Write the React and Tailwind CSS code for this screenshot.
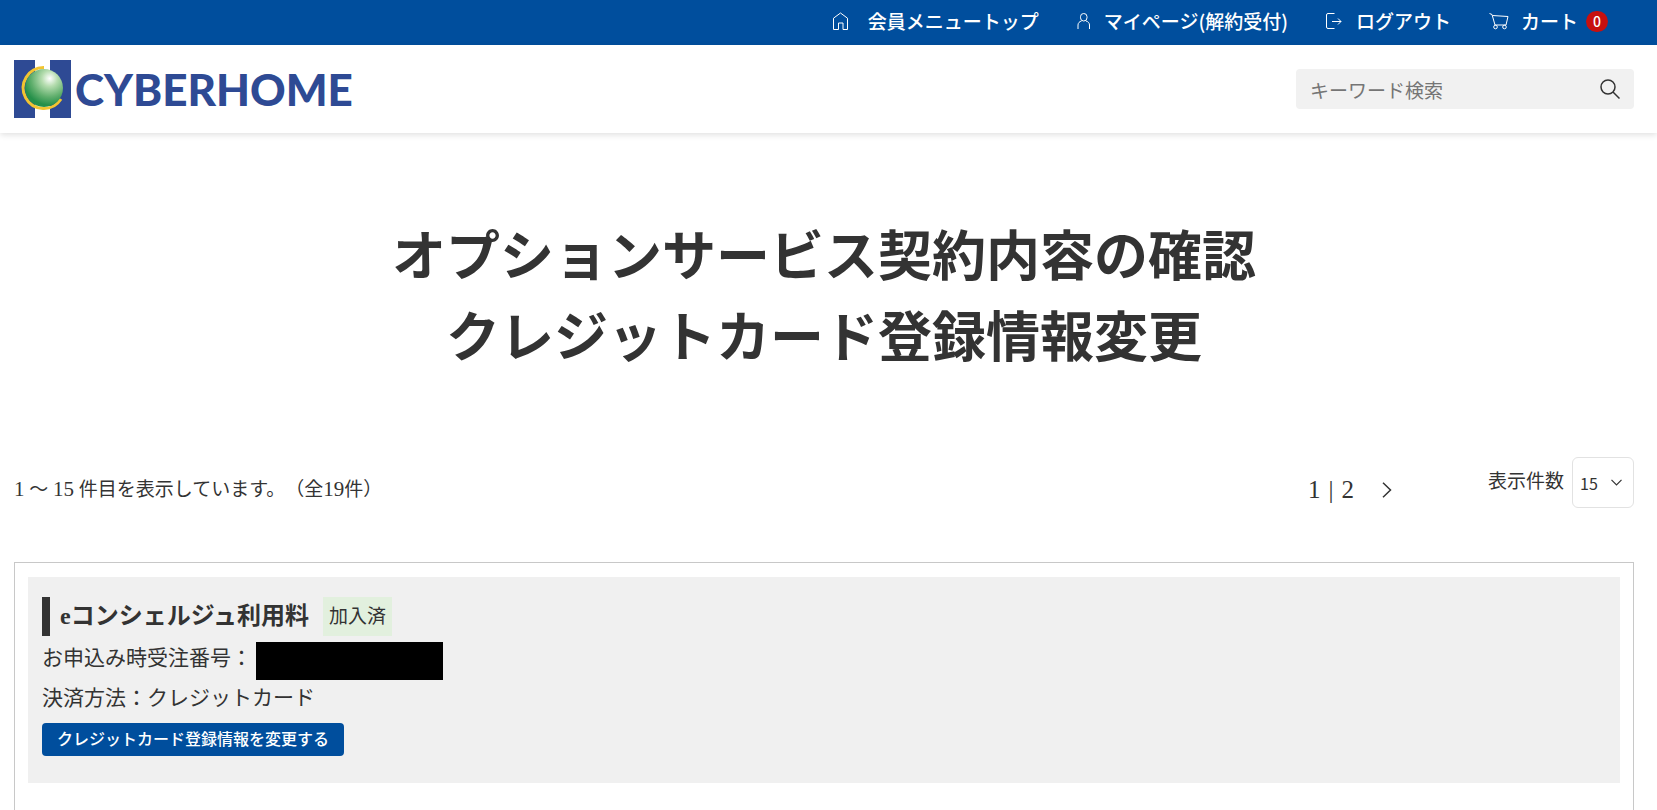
import React, { useState } from 'react';

const HomeIcon = () => (
  <svg className="w-4 h-[18px]" viewBox="0 0 16 18" fill="none" stroke="currentColor" aria-hidden="true">
    <path d="M1.500 17.500V6.200L8.500 1l7 5.200v11.300h-4.500v-6.500H6.500v6.500z" />
  </svg>
);

const UserIcon = () => (
  <svg className="w-[13px] h-4" viewBox="0 0 13 16" fill="none" stroke="currentColor" aria-hidden="true">
    <rect x="3.500" y=".5" width="6.500" height="7.500" rx="3.200" />
    <path d="M1 16v-4c0-2 1.500-3.500 3.500-4M12.500 16v-4c0-2-1.500-3.500-3.500-4" />
  </svg>
);

const LogoutIcon = () => (
  <svg className="w-4 h-4" viewBox="0 0 16 16" fill="none" stroke="currentColor" aria-hidden="true">
    <path d="M8.500 .5H2A1.500 1.500 0 0 0 .5 2v12A1.500 1.500 0 0 0 2 15.500h6.500M6 8.500h9M12 5.500l3 3-3 3" />
  </svg>
);

const CartIcon = () => (
  <svg className="w-5 h-[18px]" viewBox="0 0 20 18" fill="none" stroke="currentColor" aria-hidden="true">
    <path d="M.5 1.500l2.500 1 3 10.500h11l2-8.500L3.500 3.500" />
    <circle cx="6.500" cy="15" r="1.800" />
    <circle cx="15.500" cy="15" r="1.800" />
  </svg>
);

const SearchIcon = () => (
  <svg className="w-5 h-5" viewBox="0 0 20 20" fill="none" stroke="currentColor" strokeWidth="1.500" aria-hidden="true">
    <circle cx="8" cy="8" r="7" />
    <path d="M13 13l6.500 6.500" />
  </svg>
);

const Logo = () => (
  <a href="#" aria-label="CYBERHOME" className="flex items-center gap-1 text-[#2e4a94]">
    <svg className="w-[57px] h-[58px]" viewBox="0 0 57 58" aria-hidden="true">
      <defs>
        <radialGradient id="ball" cx="0.650" cy="0.250" r="0.700">
          <stop offset="0" stopColor="#fff" />
          <stop offset="0.300" stopColor="#b4dcae" />
          <stop offset="0.700" stopColor="#5fae6c" />
          <stop offset="1" stopColor="#25904a" />
        </radialGradient>
      </defs>
      <path d="M0 0h21v58H0zM36 0h21v58H36z" fill="#2e4a94" />
      <path d="M30 7.500A20.500 20.500 0 1 0 47 39" fill="none" stroke="#f2c431" strokeWidth="3" />
      <circle cx="30" cy="28" r="19" fill="url(#ball)" />
    </svg>
    <span className="font-[Lato,sans-serif] font-black text-[44px] leading-none">CYBERHOME</span>
  </a>
);

const menuItems = [
  { label: '会員メニュートップ', icon: <HomeIcon />, gap: 'gap-5' },
  { label: 'マイページ(解約受付)', icon: <UserIcon />, gap: 'gap-3.5' },
  { label: 'ログアウト', icon: <LogoutIcon />, gap: 'gap-3.5' },
  { label: 'カート', icon: <CartIcon />, gap: 'gap-3', count: 0 },
];

const Num = ({ children }) => <span className="text-[21px]">{children}</span>;

const App = () => {
  const [keyword, setKeyword] = useState('');
  const [perPage, setPerPage] = useState('15');

  return (
    <div className="font-['Liberation_Serif','Noto_Sans_CJK_JP',sans-serif] text-[#333]" lang="ja">
      <nav className="flex justify-end items-center gap-[38px] h-[45px] pr-[49px] pb-[3px] bg-[#004e9d] text-white font-['Noto_Sans_CJK_JP',sans-serif] font-medium text-[19px] whitespace-nowrap">
        {menuItems.map((item) => (
          <a key={item.label} href="#" className={`flex items-center ${item.gap}`}>
            {item.icon}
            <span className="flex items-center gap-2">
              {item.label}
              {item.count !== undefined && (
                <span className="flex items-center justify-center w-[22px] h-[21px] rounded-full bg-[#c7100f] text-sm">
                  {item.count}
                </span>
              )}
            </span>
          </a>
        ))}
      </nav>

      <header className="flex justify-between items-center h-[88px] pl-3.5 pr-[23px] shadow-[0_2px_6px_rgba(0,0,0,0.120)]">
        <Logo />
        <form
          className="flex items-center w-[338px] h-10 px-3.5 rounded bg-[#f1f1f1]"
          onSubmit={(e) => e.preventDefault()}
        >
          <input
            type="text"
            aria-label="キーワード検索"
            placeholder="キーワード検索"
            value={keyword}
            onChange={(e) => setKeyword(e.target.value)}
            className="flex-1 min-w-0 pt-0.5 bg-transparent outline-none font-['Noto_Sans_CJK_JP',sans-serif] text-[19px] placeholder:text-[#757575]"
          />
          <button type="submit" aria-label="検索">
            <SearchIcon />
          </button>
        </form>
      </header>

      <main className="pl-3.5 pr-[23px]">
        <h1 className="pt-[85px] text-center text-[54px] leading-[81px] font-bold">
          オプションサービス契約内容の確認
          <br />
          クレジットカード登録情報変更
        </h1>

        <div className="flex items-center mt-[77px] h-[51px]">
          <p className="flex-1 pt-3.5 text-[19px] [text-spacing-trim:space-all]">
            <Num>1</Num> ～ <Num>15</Num> 件目を表示しています。（全<Num>19</Num>件）
          </p>
          <div className="flex items-center gap-2 pt-3.5 text-[25px]">
            <span>1</span>
            <span>|</span>
            <a href="#">2</a>
            <a href="#" aria-label="次へ" className="ml-5">
              <svg className="w-2.5 h-4" viewBox="0 0 10 16" fill="none" stroke="currentColor" strokeWidth="1.500">
                <path d="M1 .8L8.500 8 1 15.200" />
              </svg>
            </a>
          </div>
          <label htmlFor="perPage" className="ml-24 mr-2 text-[19px]">
            表示件数
          </label>
          <div className="relative">
            <select
              id="perPage"
              value={perPage}
              onChange={(e) => setPerPage(e.target.value)}
              className="appearance-none w-[62px] h-[51px] pl-[7px] border border-[#e2e2e2] rounded-md bg-white font-['Noto_Sans_CJK_JP',sans-serif] text-base"
            >
              <option>15</option>
              <option>30</option>
              <option>50</option>
            </select>
            <svg
              className="absolute right-3 top-[22px] w-[11px] h-[7px] pointer-events-none"
              viewBox="0 0 11 7"
              fill="none"
              stroke="currentColor"
              strokeWidth="1.200"
              aria-hidden="true"
            >
              <path d="M.5 .8l5 5 5-5" />
            </svg>
          </div>
        </div>

        <section className="mt-[54px] px-[13px] pt-3.5 min-h-[248px] border border-b-0 border-[#c8c8c8]">
          <div className="px-3.5 pt-5 pb-[27px] bg-[#f0f0f0] text-[21px]">
            <div className="flex items-center gap-3.5">
              <h2 className="border-l-8 border-[#333] pl-2.5 text-2xl leading-[39px] font-bold">eコンシェルジュ利用料</h2>
              <span className="px-1.5 bg-[#e2f0de] text-[19px] leading-[39px]">加入済</span>
            </div>
            <p className="flex items-start gap-1 pt-1.5 leading-8">
              お申込み時受注番号：
              <span className="w-[187px] h-[38px] bg-black" />
            </p>
            <p className="leading-9">決済方法：クレジットカード</p>
            <button type="button" className="block mt-[7px] px-[15px] h-[33px] rounded bg-[#004e9d] text-white font-medium text-base">
              クレジットカード登録情報を変更する
            </button>
          </div>
        </section>
      </main>
    </div>
  );
};

export default App;
